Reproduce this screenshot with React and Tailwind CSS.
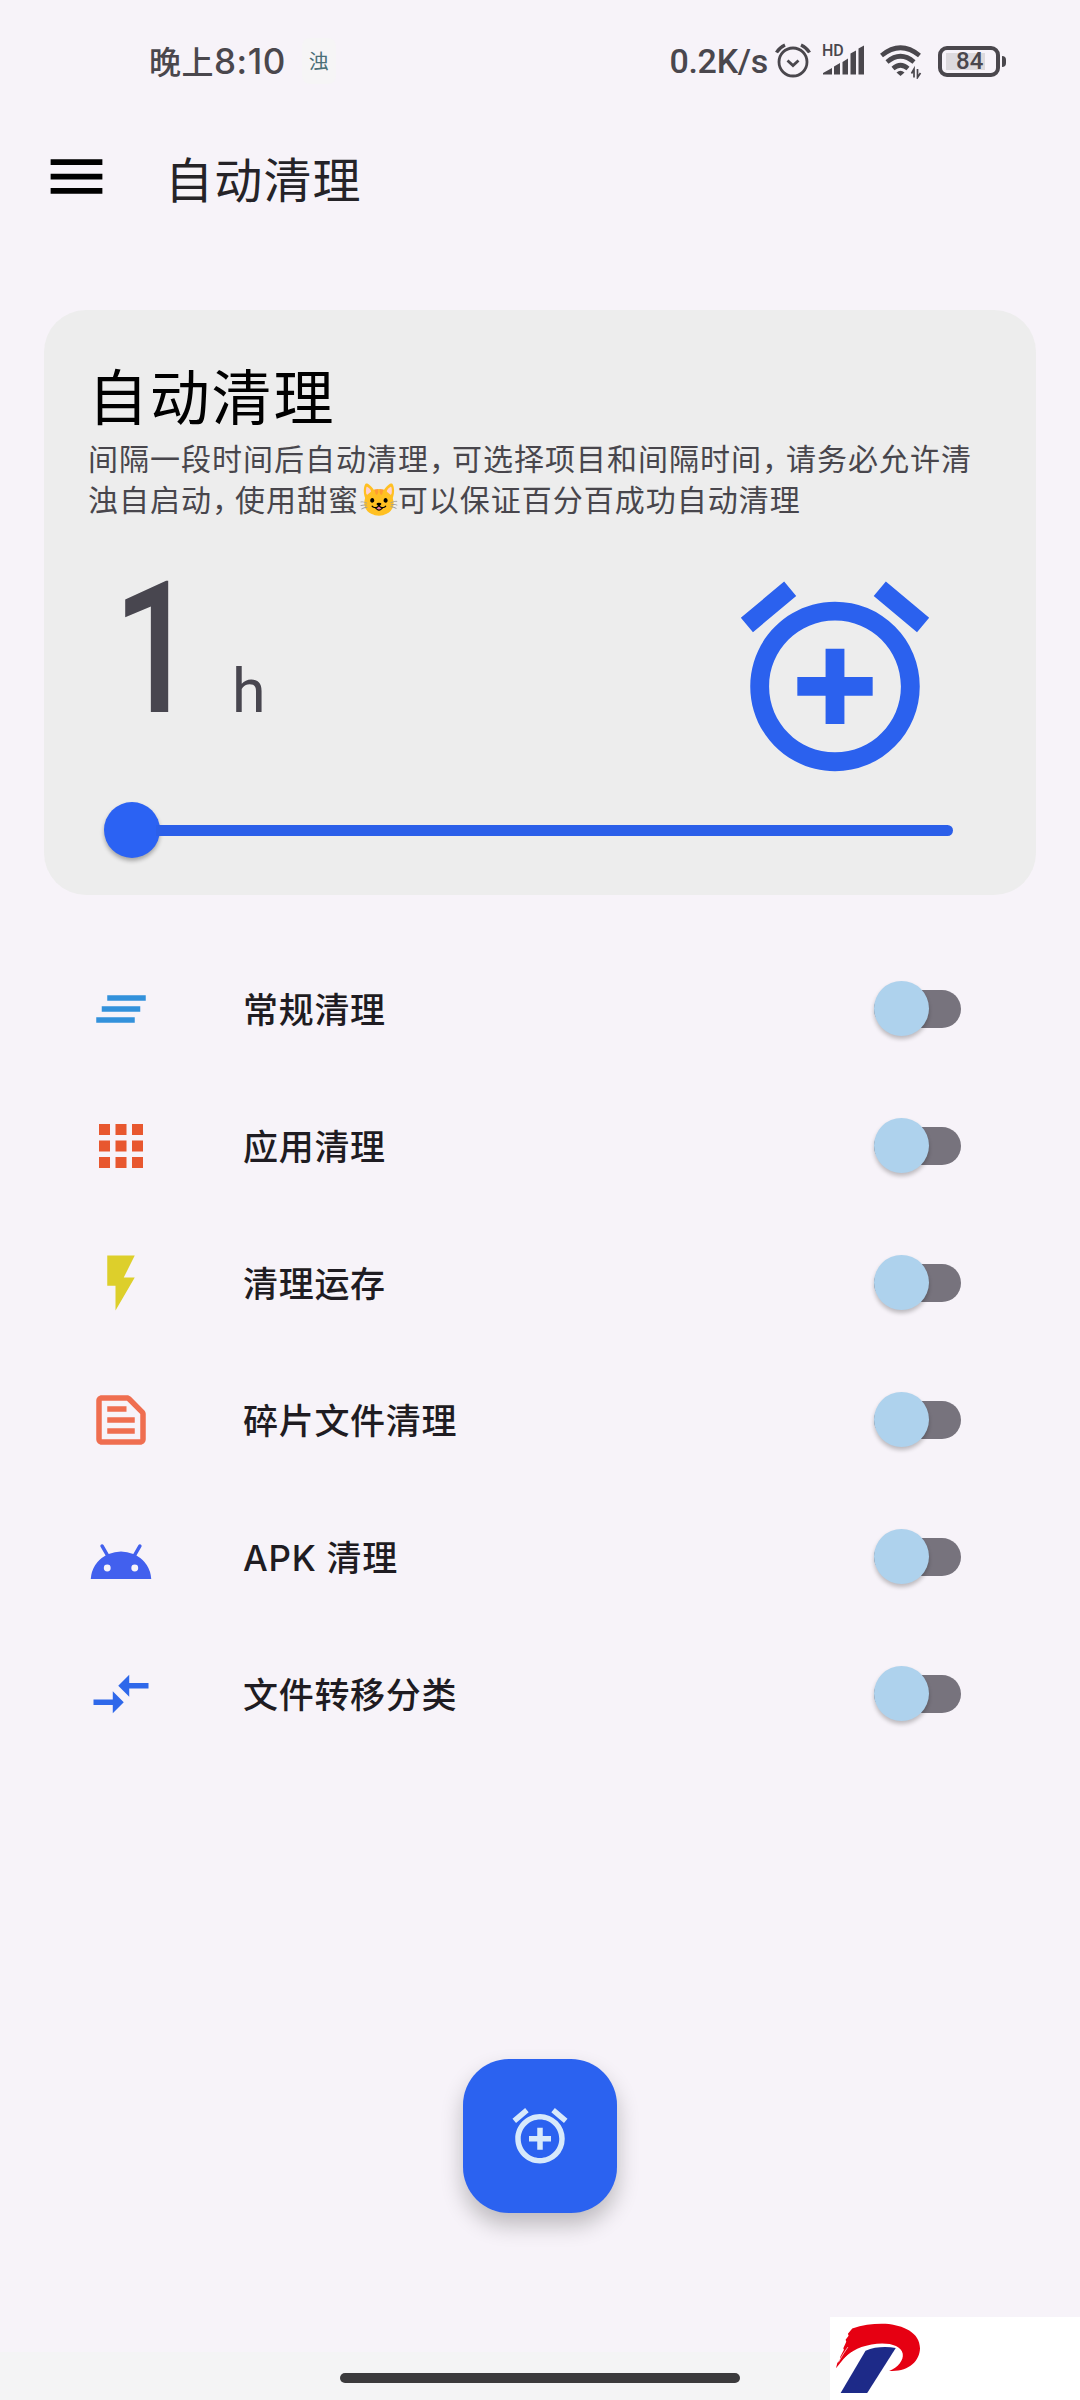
import { useState } from 'react';
import { MdMenu, MdAlarmAdd, MdClearAll, MdApps, MdFlashOn, MdOutlineTextSnippet, MdCompareArrows } from 'react-icons/md';

const AndroidIcon = ({ className }) => (
    <svg viewBox="0 -2 24 24" fill="currentColor" className={className}>
        <path d="M17.6 9.48l1.84-3.18c.16-.31.04-.69-.26-.85a.637.637 0 0 0-.83.22l-1.88 3.24a11.463 11.463 0 0 0-8.94 0L5.65 5.67a.643.643 0 0 0-.87-.2c-.28.18-.37.54-.22.83L6.4 9.48A10.78 10.78 0 0 0 1 18h22a10.78 10.78 0 0 0-5.4-8.52zM7 15.25a1.25 1.25 0 1 1 0-2.5 1.25 1.25 0 0 1 0 2.5zm10 0a1.25 1.25 0 1 1 0-2.5 1.25 1.25 0 0 1 0 2.5z" />
    </svg>
);

const items = [
    { id: 'normal', label: '常规清理', Icon: MdClearAll, color: 'text-[#3391db]' },
    { id: 'apps', label: '应用清理', Icon: MdApps, color: 'text-[#e8572f]' },
    { id: 'memory', label: '清理运存', Icon: MdFlashOn, color: 'text-[#ddcf2b]' },
    { id: 'fragments', label: '碎片文件清理', Icon: MdOutlineTextSnippet, color: 'text-[#ef6e50]' },
    { id: 'apk', label: 'APK 清理', Icon: AndroidIcon, color: 'text-[#4260ee]' },
    { id: 'transfer', label: '文件转移分类', Icon: MdCompareArrows, color: 'text-[#2f68ea]' },
];

function StatusBar() {
    return (
        <div className="flex h-[122px] items-center justify-between pl-[149px] pr-[74px] text-[#4a474d]">
            <div className="flex items-center">
                <span className="text-[32px] font-medium leading-none tracking-[0.5px]">晚上<span className="text-[35px] leading-none">8:10</span></span>
                <span className="ml-[16px] flex h-[46px] w-[34px] items-center justify-center rounded-lg bg-[#f6f5f6] font-['Noto_Sans_CJK_SC',sans-serif] text-[20px] leading-none text-[#4b6f78]">浊</span>
            </div>

            <div className="flex items-center">
                <span className="font-['Roboto',sans-serif] text-[34px] font-medium leading-none tracking-[-0.3px]">0.2K/s</span>

                {/* Alarma */}
                <svg viewBox="0 0 36 36" className="ml-[7px] h-[36px] w-[36px]" fill="none" stroke="currentColor" strokeWidth="2.8">
                    <circle cx="18" cy="19" r="14" />
                    <path d="M12.5 17.5l5.5 5 5.5-5" strokeWidth="2.8" />
                    <path d="M1.5 9.5Q4.5 4.5 10 2M34.5 9.5Q31.5 4.5 26 2" strokeWidth="3.4" />
                </svg>

                {/* Señal */}
                <svg viewBox="0 -7 44 50" className="ml-[11px] h-[50px] w-[44px]" fill="currentColor">
                    <text x="0" y="12.5" fontSize="16" fontWeight="500" fontFamily="Roboto, sans-serif">HD</text>
                    <path d="M1 31.5V30L10 25V31.5zM12 31.5V23.5L18 20V31.5zM20.5 31.5V19L26 15.5V31.5zM28.5 31.5V10.5L34 7.5V31.5zM36.5 31.5V5.5L42 2.5V31.5z" />
                </svg>

                {/* Wifi */}
                <svg viewBox="0 0 44 36" className="ml-[13px] h-[36px] w-[44px]" fill="none" stroke="currentColor" strokeWidth="4.6">
                    <path d="M2.5 12.5Q21.5-3 40.5 12.5" />
                    <path d="M8 19Q21.5 7.5 35 19" />
                    <path d="M14 25.5Q21.5 19 29 25.5" />
                    <path d="M17.5 29.5Q21.5 26 25.5 29.5L21.5 33z" fill="currentColor" stroke="none" />
                    <path d="M35 34.5V26L32.5 30.5M38.5 26V34.5L41.5 30" strokeWidth="1.7" />
                </svg>

                {/* Batería */}
                <div className="ml-[15px] flex items-center">
                    <div className="flex h-[31px] w-[62px] items-center rounded-[9px] border-4 border-current pl-1">
                        <div className="h-[17px] w-[39px] bg-[#dddade] pl-2.5">
                            <span className="block w-7 font-['Roboto',sans-serif] text-[24px] font-medium leading-[17px]">84</span>
                        </div>
                    </div>
                    <div className="ml-0.5 h-[11px] w-[4px] rounded-r-sm bg-current" />
                </div>
            </div>
        </div>
    );
}

function Switch({ checked, onChange }) {
    return (
        <button role="switch" aria-checked={checked} onClick={onChange} className="flex h-[55px] w-[87px] items-center">
            <span className="flex h-[38px] w-full items-center rounded-full bg-[#77737d]">
                <span className={`h-[55px] w-[55px] shrink-0 rounded-full bg-[#aed2ed] shadow-[0_3px_4px_rgba(0,0,0,0.24)] ${checked ? 'ml-auto' : ''}`} />
            </span>
        </button>
    );
}

function BrandLogo() {
    return (
        <div className="flex h-[83px] w-[250px] items-start bg-white">
            <svg viewBox="30 36 280 249" className="h-[83px] w-[93px]">
                <path fill="#e60012" d="M48 190L52 174 60 163 61 155 72 134 70 130 79 110 77 104 86 92 84 86 97 70C130 58 165 55 197 56C250 60 301 82 301 130C300 170 265 202 208 198C235 188 252 165 249 146C244 118 200 110 155 118C110 126 85 145 70 163z" />
                <path fill="none" stroke="#fff" strokeWidth="2" d="M55 172Q70 145 84 126M62 178Q78 152 96 142" />
                <path fill="#1d2a88" d="M62 264L137 137C165 125 200 124 228 129L142 264z" />
            </svg>
        </div>
    );
}

export default function App() {
    const [enabled, setEnabled] = useState({});

    const toggle = (id) => {
        setEnabled(prev => ({ ...prev, [id]: !prev[id] }));
    };

    return (
        <div className="flex h-[2400px] w-[1080px] flex-col overflow-hidden bg-[#f7f3f9] font-['Inter','Noto_Sans_CJK_SC',sans-serif]">
            <StatusBar />

            <header className="flex h-[109px] items-center pl-[42px]">
                <MdMenu className="h-[69px] w-[69px] text-black" />
                <h1 className="ml-[54px] pt-[8px] text-[48px] leading-none tracking-[1.2px] text-[#252328]">自动清理</h1>
            </header>

            {/* Tarjeta del intervalo */}
            <section className="mx-[44px] mt-[79px] flex h-[585px] flex-col rounded-[42px] bg-[#ededed] pl-[44px] pr-[60px] pt-[53px]">
                <h2 className="text-[60px] leading-[70px] tracking-[1.8px] text-black">自动清理</h2>
                <p className="mt-[6px] h-[83px] whitespace-nowrap text-[30px] leading-[41px] tracking-[1px] text-[#48464c]">
                    间隔一段时间后自动清理<span className="tracking-[-7px]">，</span>可选择项目和间隔时间<span className="tracking-[-6px]">，</span>请务必允许清
                    <br />
                    浊自启动<span className="tracking-[-7px]">，</span>使用甜蜜<span className="font-['Noto_Color_Emoji'] text-[32px] leading-none tracking-[-1px]">😺</span>可以保证百分百成功自动清理
                </p>

                <div className="mt-[42px] flex h-[226px] justify-between">
                    <div className="-mt-[7px] flex items-baseline pl-[25px] font-['Roboto',sans-serif] text-[#48464f]">
                        <span className="inline-block w-[103px] origin-left scale-x-[0.8] text-[184px] font-medium leading-[184px]">1</span>
                        <span className="ml-[16px] text-[61px]">h</span>
                    </div>
                    <MdAlarmAdd className="mr-[28px] h-[226px] w-[226px] text-[#2b61ee]" />
                </div>

                <div className="mt-[12px] flex items-center pl-[16px]">
                    <div className="h-[56px] w-[56px] rounded-full bg-[#2b62f3] shadow-[0_3px_4px_rgba(0,0,0,0.3)]" />
                    <div className="-ml-1 h-[11px] w-[797px] rounded-r-full bg-[#2b5fe9]" />
                </div>
            </section>

            <ul className="mt-[45px] flex flex-col">
                {items.map(({ id, label, Icon, color }) => (
                    <li key={id} className="flex h-[137px] items-center pl-[88px] pr-[119px]">
                        <Icon className={`h-[66px] w-[66px] ${color}`} />
                        <span className="ml-[89px] flex-1 pt-[4px] text-[35px] font-medium leading-none tracking-[0.7px] text-[#1f1c22]">{label}</span>
                        <Switch checked={!!enabled[id]} onChange={() => toggle(id)} />
                    </li>
                ))}
            </ul>

            <button className="mx-auto mt-[297px] flex h-[154px] w-[154px] shrink-0 items-center justify-center rounded-[46px] bg-[#2b62f0] shadow-[0_12px_22px_rgba(0,0,0,0.24)]">
                <MdAlarmAdd className="h-[66px] w-[66px] text-[#d7e9fb]" />
            </button>

            {/* Barra de gestos y logo */}
            <footer className="relative mt-auto flex h-[48px] shrink-0 justify-center bg-[#f4f4f5] pt-[21px]">
                <div className="h-[10px] w-[400px] rounded-full bg-[#3b3a3c]" />
                <div className="absolute bottom-0 right-0">
                    <BrandLogo />
                </div>
            </footer>
        </div>
    );
}
